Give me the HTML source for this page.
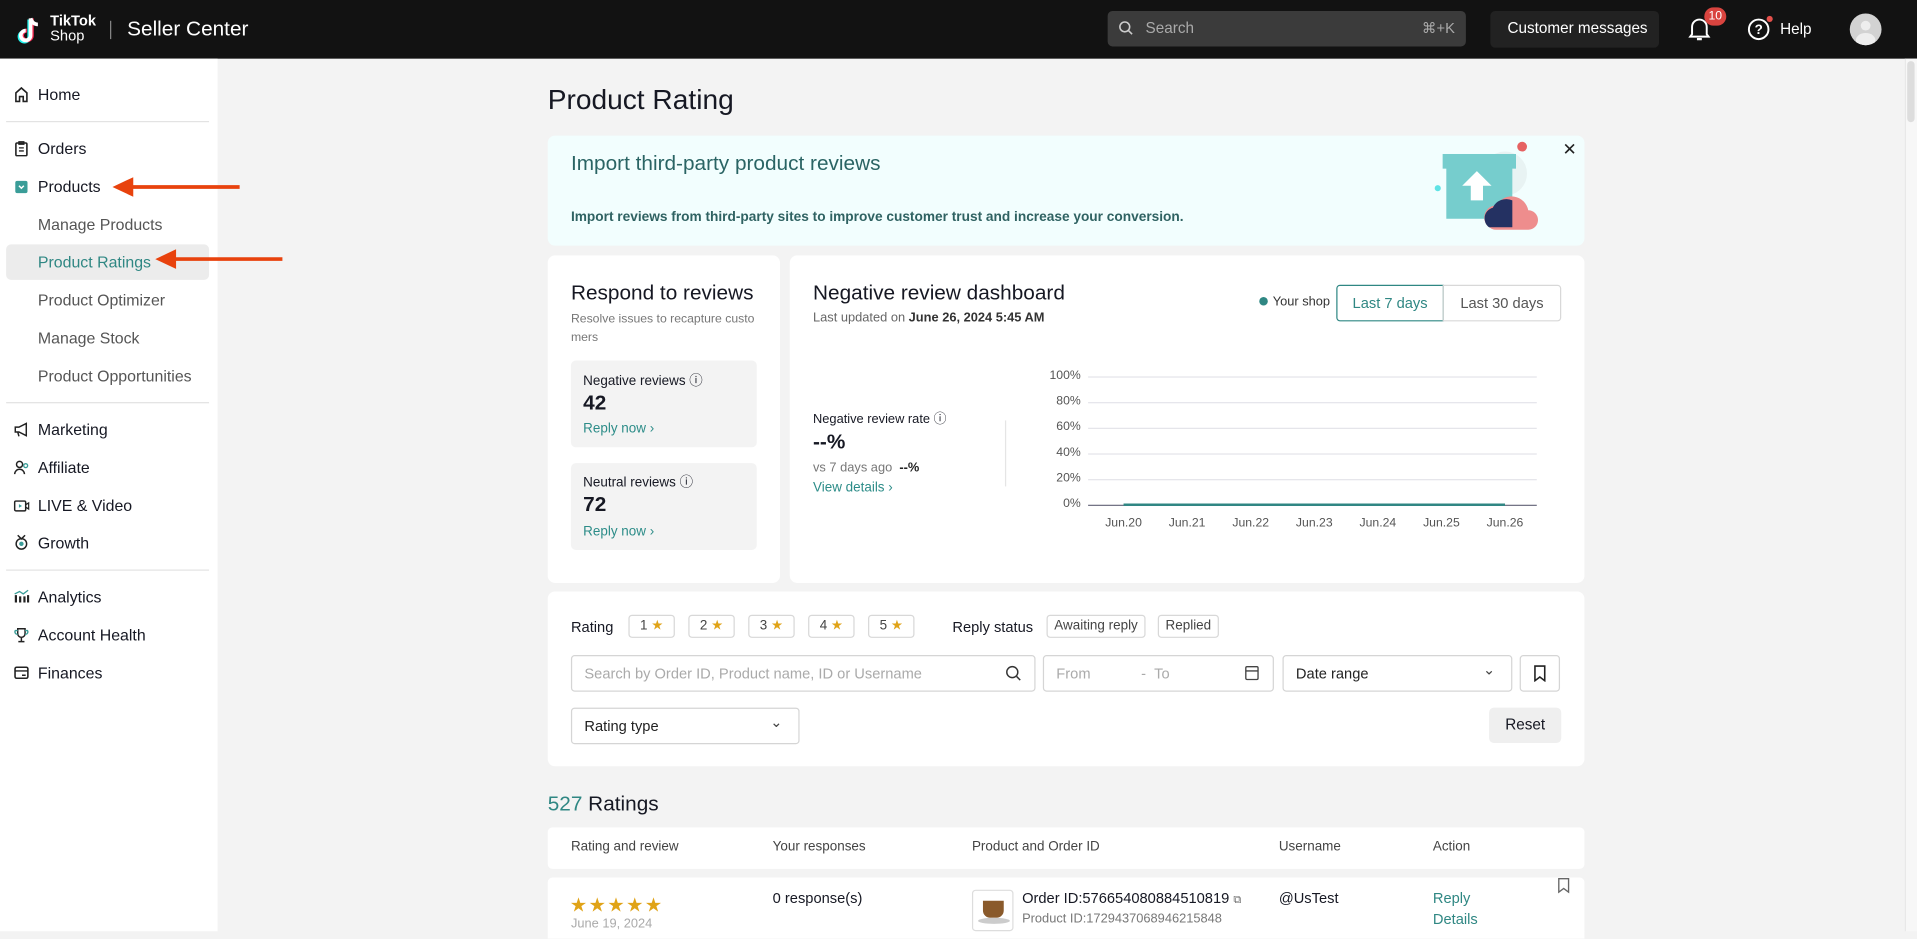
<!DOCTYPE html>
<html><head><meta charset="utf-8">
<style>
*{box-sizing:border-box;margin:0;padding:0}
html,body{width:1917px;height:930px;overflow:hidden;background:#f3f3f3}
body{font-family:"Liberation Sans",sans-serif;color:#161823}
#w{position:absolute;left:0;top:0;width:1568px;height:762px;transform:scale(1.22258,1.2221);transform-origin:0 0;background:#f3f3f3}
.a{position:absolute}
.hdr{left:0;top:0;width:1568px;height:48px;background:#121212}
.side{left:0;top:48px;width:178px;height:714px;background:#fff}
.ni{position:absolute;left:31px;font-size:13px;color:#161823;line-height:16px}
.sub{color:#555}
.ic{position:absolute;left:11px;width:13px;height:13px}
.dv{position:absolute;left:5px;width:166px;height:1px;background:#e3e3e3}
.card{position:absolute;background:#fff;border-radius:6px}
.t{position:absolute;white-space:nowrap}
.teal{color:#2c8c88}
.chip{position:absolute;top:503px;height:19px;border:1px solid #d8d8d8;border-radius:3px;font-size:11px;color:#444;line-height:17px;text-align:center}
.star{color:#e0a317}
.inp{position:absolute;height:30px;border:1px solid #d5d5d5;border-radius:3px;background:#fff;font-size:12px;line-height:28px;padding-left:10px}
.gl{position:absolute;left:890px;width:367px;height:1px;background:#e4e4ea}
.yl{position:absolute;width:40px;left:844px;text-align:right;font-size:10px;color:#555}
.xl{position:absolute;top:423px;font-size:10px;color:#555;width:40px;text-align:center}
</style></head><body><div id="w">
<div class="a hdr">
 <svg class="a" style="left:11px;top:12px" width="26" height="26" viewBox="0 0 26 26"><path d="M14 3v14a4 4 0 1 1-4-4" fill="none" stroke="#25f4ee" stroke-width="3.2" transform="translate(-1,1)"/><path d="M14 3v14a4 4 0 1 1-4-4" fill="none" stroke="#fe2c55" stroke-width="3.2" transform="translate(1,0)"/><path d="M14 3v14a4 4 0 1 1-4-4M14 3c1 3 3 5 6 5" fill="none" stroke="#fff" stroke-width="3"/></svg>
 <div class="t" style="left:41px;top:11px;color:#fff;font-size:12px;font-weight:bold;line-height:12px">TikTok</div>
 <div class="t" style="left:41px;top:23px;color:#fff;font-size:12px;line-height:13px">Shop</div>
 <div class="a" style="left:90px;top:17px;width:1px;height:15px;background:#888"></div>
 <div class="t" style="left:104px;top:14px;color:#fff;font-size:17px">Seller Center</div>
 <div class="a" style="left:906px;top:9px;width:293px;height:29px;background:#3b3b3b;border-radius:4px"></div>
 <svg class="a" style="left:915px;top:17px" width="12" height="12" viewBox="0 0 12 12"><circle cx="5" cy="5" r="4" fill="none" stroke="#ccc" stroke-width="1.3"/><path d="M8 8l3 3" stroke="#ccc" stroke-width="1.3"/></svg>
 <div class="t" style="left:937px;top:16px;color:#aaa;font-size:12.5px">Search</div>
 <div class="t" style="left:1163px;top:16px;color:#aaa;font-size:12px">⌘+K</div>
 <div class="a" style="left:1219px;top:9px;width:138px;height:30px;background:#222;border-radius:4px"></div>
 <div class="t" style="left:1233px;top:16px;color:#fff;font-size:12.5px">Customer messages</div>
 <svg class="a" style="left:1381px;top:14px" width="18" height="20" viewBox="0 0 18 20"><path d="M3 14V8a6 6 0 0 1 12 0v6l1.5 2h-15z" fill="none" stroke="#fff" stroke-width="1.6"/><path d="M7 18h4" stroke="#fff" stroke-width="1.8"/></svg>
 <div class="a" style="left:1394px;top:6px;width:18px;height:15px;border-radius:8px;background:#d9443f;color:#fff;font-size:10px;text-align:center;line-height:15px">10</div>
 <svg class="a" style="left:1429px;top:14px" width="20" height="20" viewBox="0 0 20 20"><circle cx="9.5" cy="10" r="8" fill="none" stroke="#fff" stroke-width="1.6"/><text x="9.5" y="14" font-size="11" font-weight="bold" text-anchor="middle" fill="#fff" font-family="Liberation Sans">?</text></svg>
 <div class="a" style="left:1445px;top:13px;width:5px;height:5px;border-radius:50%;background:#e4504b"></div>
 <div class="t" style="left:1456px;top:17px;color:#fff;font-size:12.5px">Help</div>
 <div class="a" style="left:1513px;top:11px;width:26px;height:26px;border-radius:50%;background:#d2d2d2;overflow:hidden"><div class="a" style="left:9px;top:6px;width:8px;height:8px;border-radius:50%;background:#eee"></div><div class="a" style="left:5px;top:16px;width:16px;height:12px;border-radius:50%;background:#eee"></div></div>
</div>
<div class="a" style="left:1558px;top:48px;width:10px;height:714px;background:#f7f7f7;border-left:1px solid #e8e8e8"></div>
<div class="a" style="left:1560px;top:50px;width:6px;height:50px;background:#ddd;border-radius:3px"></div>
<div class="a side">
 <div class="a" style="left:5px;top:152px;width:166px;height:29px;background:#ececec;border-radius:4px"></div>
</div>
<svg class="ic" style="top:71px" viewBox="0 0 13 13"><path d="M2 12V5l4.5-4 4.5 4v7H8V8H5v4z" fill="none" stroke="#222" stroke-width="1.3"/></svg>
<div class="ni" style="top:70px">Home</div>
<div class="dv" style="top:99px"></div>
<svg class="ic" style="top:115px" viewBox="0 0 13 13"><rect x="2" y="2" width="9" height="10.5" rx="1" fill="none" stroke="#222" stroke-width="1.3"/><path d="M4.5 1h4v2h-4z M4.5 6h4M4.5 8.5h4" stroke="#222" stroke-width="1.1" fill="none"/></svg>
<div class="ni" style="top:114px">Orders</div>
<svg class="ic" style="top:146px" viewBox="0 0 13 13"><rect x="1.5" y="2" width="10" height="10" rx="1.5" fill="#3a9d98"/><path d="M4.5 6l2 2 2-2" stroke="#fff" stroke-width="1.2" fill="none"/></svg>
<div class="ni" style="top:145px">Products</div>
<div class="ni sub" style="top:176px">Manage Products</div>
<div class="ni teal" style="top:207px;color:#2f8783">Product Ratings</div>
<div class="ni sub" style="top:238px">Product Optimizer</div>
<div class="ni sub" style="top:269px">Manage Stock</div>
<div class="ni sub" style="top:300px">Product Opportunities</div>
<div class="dv" style="top:329px"></div>
<svg class="ic" style="top:345px" viewBox="0 0 13 13"><path d="M1.5 4.5h3l6-3v10l-6-3h-3z M3.5 8.5l1 3.5" fill="none" stroke="#222" stroke-width="1.2"/></svg>
<div class="ni" style="top:344px">Marketing</div>
<svg class="ic" style="top:376px" viewBox="0 0 13 13"><circle cx="5" cy="4" r="2.5" fill="none" stroke="#222" stroke-width="1.2"/><path d="M1 12a4 4 0 0 1 8 0" fill="none" stroke="#222" stroke-width="1.2"/><circle cx="10" cy="5" r="1.6" fill="none" stroke="#3a9d98" stroke-width="1.1"/></svg>
<div class="ni" style="top:375px">Affiliate</div>
<svg class="ic" style="top:407px" viewBox="0 0 13 13"><rect x="1" y="3" width="9" height="8" rx="1" fill="none" stroke="#222" stroke-width="1.2"/><path d="M10 6l2.5-1.5v5L10 8" fill="none" stroke="#222" stroke-width="1.1"/><path d="M4.5 5.5v3l2.5-1.5z" fill="#3a9d98"/></svg>
<div class="ni" style="top:406px">LIVE &amp; Video</div>
<svg class="ic" style="top:437px" viewBox="0 0 13 13"><circle cx="6.5" cy="8" r="4.3" fill="none" stroke="#222" stroke-width="1.2"/><path d="M3.5 1l3 3 3-3" fill="none" stroke="#222" stroke-width="1.2"/><circle cx="6.5" cy="8" r="1.8" fill="#3a9d98"/></svg>
<div class="ni" style="top:437px">Growth</div>
<div class="dv" style="top:466px"></div>
<svg class="ic" style="top:481px" viewBox="0 0 13 13"><path d="M2 6v6M5.5 7v5M9 7v5M12 6v6" stroke="#222" stroke-width="1.8"/><path d="M1 5l4-2 3 2 4-3" stroke="#3a9d98" stroke-width="1.1" fill="none"/></svg>
<div class="ni" style="top:481px">Analytics</div>
<svg class="ic" style="top:513px" viewBox="0 0 13 13"><path d="M3.5 1.5h6v4a3 3 0 0 1-6 0z M6.5 8.5v3M4 12h5" fill="none" stroke="#222" stroke-width="1.2"/><path d="M3.5 3H1.5a2 2 0 0 0 2 3M9.5 3h2a2 2 0 0 1-2 3" fill="none" stroke="#3a9d98" stroke-width="1.1"/></svg>
<div class="ni" style="top:512px">Account Health</div>
<svg class="ic" style="top:544px" viewBox="0 0 13 13"><rect x="1.3" y="2" width="10.5" height="9" rx="1.3" fill="none" stroke="#222" stroke-width="1.3"/><path d="M1.5 5h10M7 8.5h3" stroke="#222" stroke-width="1.2"/></svg>
<div class="ni" style="top:543px">Finances</div>
<svg class="a" style="left:85px;top:140px" width="150" height="85" viewBox="0 0 150 85"><path d="M111 13H20" stroke="#e8420d" stroke-width="3"/><path d="M7 13l17-8v16z" fill="#e8420d"/><path d="M146 72H55" stroke="#e8420d" stroke-width="3"/><path d="M42 72l17-8v16z" fill="#e8420d"/></svg>

<div class="t" style="left:448px;top:68px;font-size:23px;color:#161823">Product Rating</div>
<div class="card" style="left:448px;top:111px;width:848px;height:90px;background:#f2fefe"></div>
<div class="t" style="left:467px;top:124px;font-size:17px;color:#2a6464">Import third-party product reviews</div>
<div class="t" style="left:467px;top:172px;font-size:11.2px;font-weight:bold;color:#2f6262">Import reviews from third-party sites to improve customer trust and increase your conversion.</div>
<svg class="a" style="left:1168px;top:114px" width="95" height="82" viewBox="0 0 95 82"><circle cx="63" cy="28" r="18" fill="#e8f3f3"/><circle cx="77" cy="6" r="4" fill="#e66262"/><circle cx="8" cy="40" r="2.5" fill="#5fe3e5"/><rect x="12" y="12" width="60" height="12" fill="#76cdcd"/><rect x="15" y="22" width="54" height="43" fill="#76cdcd"/><path d="M40 26l-12 12h7v12h10V38h7z" fill="#fff"/><path d="M56 74a10 10 0 0 1 0-20 14 14 0 0 1 26 4 8 8 0 0 1 0 16z" fill="#ee8d8d"/><path d="M50 72a9 9 0 0 1 3-16 12 12 0 0 1 16-6v22z" fill="#243162"/></svg>
<div class="t" style="left:1278px;top:114px;font-size:14px;color:#222">✕</div>

<div class="card" style="left:448px;top:209px;width:190px;height:268px"></div>
<div class="t" style="left:467px;top:230px;font-size:17px">Respond to reviews</div>
<div class="t" style="left:467px;top:254px;font-size:10px;color:#777;line-height:15px">Resolve issues to recapture custo<br>mers</div>
<div class="a" style="left:467px;top:295px;width:152px;height:71px;background:#f3f3f3;border-radius:4px"></div>
<div class="t" style="left:477px;top:303px;font-size:11px">Negative reviews ⓘ</div>
<div class="t" style="left:477px;top:320px;font-size:17px;font-weight:bold">42</div>
<div class="t teal" style="left:477px;top:345px;font-size:11px">Reply now ›</div>
<div class="a" style="left:467px;top:379px;width:152px;height:71px;background:#f3f3f3;border-radius:4px"></div>
<div class="t" style="left:477px;top:386px;font-size:11px">Neutral reviews ⓘ</div>
<div class="t" style="left:477px;top:403px;font-size:17px;font-weight:bold">72</div>
<div class="t teal" style="left:477px;top:429px;font-size:11px">Reply now ›</div>

<div class="card" style="left:646px;top:209px;width:650px;height:268px"></div>
<div class="t" style="left:665px;top:230px;font-size:17px">Negative review dashboard</div>
<div class="t" style="left:665px;top:254px;font-size:10.5px;color:#666">Last updated on <b style="color:#333">June 26, 2024 5:45 AM</b></div>
<div class="a" style="left:1030px;top:243px;width:7px;height:7px;border-radius:50%;background:#2f8783"></div>
<div class="t" style="left:1041px;top:241px;font-size:10.5px;color:#333">Your shop</div>
<div class="a" style="left:1093px;top:233px;width:88px;height:30px;border:1px solid #2f8783;border-radius:3px 0 0 3px;font-size:12px;color:#2f8783;text-align:center;line-height:28px">Last 7 days</div>
<div class="a" style="left:1180px;top:233px;width:97px;height:30px;border:1px solid #d8d8d8;border-radius:0 3px 3px 0;font-size:12px;color:#555;text-align:center;line-height:28px">Last 30 days</div>
<div class="t" style="left:665px;top:335px;font-size:10.5px">Negative review rate ⓘ</div>
<div class="t" style="left:665px;top:352px;font-size:17px;font-weight:bold">--%</div>
<div class="t" style="left:665px;top:377px;font-size:10.5px;color:#777">vs 7 days ago &nbsp;<b style="color:#222">--%</b></div>
<div class="t teal" style="left:665px;top:393px;font-size:11px">View details ›</div>
<div class="a" style="left:822px;top:344px;width:1px;height:54px;background:#e5e5e5"></div>
<div class="gl" style="top:308px"></div><div class="gl" style="top:329px"></div><div class="gl" style="top:350px"></div><div class="gl" style="top:371px"></div><div class="gl" style="top:392px"></div>
<div class="a" style="left:890px;top:413px;width:367px;height:1px;background:#6d6d80"></div>
<div class="a" style="left:919px;top:412px;width:312px;height:2px;background:#2f8783"></div>
<div class="yl" style="top:302px">100%</div><div class="yl" style="top:323px">80%</div><div class="yl" style="top:344px">60%</div><div class="yl" style="top:365px">40%</div><div class="yl" style="top:386px">20%</div><div class="yl" style="top:407px">0%</div>
<div class="xl" style="left:899px">Jun.20</div><div class="xl" style="left:951px">Jun.21</div><div class="xl" style="left:1003px">Jun.22</div><div class="xl" style="left:1055px">Jun.23</div><div class="xl" style="left:1107px">Jun.24</div><div class="xl" style="left:1159px">Jun.25</div><div class="xl" style="left:1211px">Jun.26</div>

<div class="card" style="left:448px;top:484px;width:848px;height:143px"></div>
<div class="t" style="left:467px;top:506px;font-size:12px">Rating</div>
<div class="chip" style="left:514px;width:38px">1 <span class="star">★</span></div>
<div class="chip" style="left:563px;width:38px">2 <span class="star">★</span></div>
<div class="chip" style="left:612px;width:38px">3 <span class="star">★</span></div>
<div class="chip" style="left:661px;width:38px">4 <span class="star">★</span></div>
<div class="chip" style="left:710px;width:38px">5 <span class="star">★</span></div>
<div class="t" style="left:779px;top:506px;font-size:12px">Reply status</div>
<div class="chip" style="left:856px;width:81px">Awaiting reply</div>
<div class="chip" style="left:947px;width:50px">Replied</div>
<div class="inp" style="left:467px;top:536px;width:380px;color:#aaa">Search by Order ID, Product name, ID or Username</div>
<svg class="a" style="left:822px;top:544px" width="14" height="14" viewBox="0 0 14 14"><circle cx="6" cy="6" r="4.5" fill="none" stroke="#333" stroke-width="1.2"/><path d="M9.5 9.5l3 3" stroke="#333" stroke-width="1.2"/></svg>
<div class="inp" style="left:853px;top:536px;width:189px;color:#aaa">From <span style="margin-left:38px">- &nbsp;To</span></div>
<svg class="a" style="left:1018px;top:544px" width="12" height="13" viewBox="0 0 12 13"><rect x="1" y="1.5" width="10" height="10.5" rx="1" fill="none" stroke="#444" stroke-width="1.1"/><path d="M1 5h10" stroke="#444" stroke-width="1.1"/></svg>
<div class="inp" style="left:1049px;top:536px;width:188px;color:#222">Date range</div>
<div class="t" style="left:1213px;top:541px;font-size:12px;color:#444">⌄</div>
<div class="inp" style="left:1243px;top:536px;width:33px;padding:0"></div>
<svg class="a" style="left:1254px;top:544px" width="11" height="14" viewBox="0 0 11 14"><path d="M1.5 1h8v12l-4-3-4 3z" fill="none" stroke="#222" stroke-width="1.3"/></svg>
<div class="inp" style="left:467px;top:579px;width:187px;color:#222">Rating type</div>
<div class="t" style="left:630px;top:584px;font-size:12px;color:#444">⌄</div>
<div class="a" style="left:1218px;top:579px;width:59px;height:29px;background:#efefef;border-radius:4px;font-size:12.5px;text-align:center;line-height:29px">Reset</div>

<div class="t" style="left:448px;top:648px;font-size:17px"><span class="teal" style="color:#2f8783">527</span> Ratings</div>
<div class="card" style="left:448px;top:677px;width:848px;height:34px;border-radius:4px"></div>
<div class="t" style="left:467px;top:687px;font-size:11px;color:#444">Rating and review</div>
<div class="t" style="left:632px;top:687px;font-size:11px;color:#444">Your responses</div>
<div class="t" style="left:795px;top:687px;font-size:11px;color:#444">Product and Order ID</div>
<div class="t" style="left:1046px;top:687px;font-size:11px;color:#444">Username</div>
<div class="t" style="left:1172px;top:687px;font-size:11px;color:#444">Action</div>
<div class="card" style="left:448px;top:718px;width:848px;height:50px;border-radius:4px 4px 0 0"></div>
<div class="t star" style="left:466px;top:731px;font-size:16px;letter-spacing:1px">★★★★★</div>
<div class="t" style="left:467px;top:750px;font-size:10.5px;color:#aaa">June 19, 2024</div>
<div class="t" style="left:632px;top:728px;font-size:12px">0 response(s)</div>
<div class="a" style="left:795px;top:728px;width:34px;height:34px;border:1px solid #ddd;border-radius:3px;background:#fff;overflow:hidden"><div class="a" style="left:8px;top:8px;width:17px;height:14px;background:#8a5a2b;border-radius:0 0 6px 6px"></div><div class="a" style="left:4px;top:22px;width:26px;height:5px;background:#ccc;border-radius:50%"></div></div>
<div class="t" style="left:836px;top:728px;font-size:12px">Order ID:576654080884510819 <span style="font-size:9px;color:#666">⧉</span></div>
<div class="t" style="left:836px;top:746px;font-size:10.5px;color:#777">Product ID:1729437068946215848</div>
<div class="t" style="left:1046px;top:728px;font-size:12px">@UsTest</div>
<div class="t" style="left:1172px;top:728px;font-size:12px;color:#2f8783">Reply</div>
<div class="t" style="left:1172px;top:745px;font-size:12px;color:#2f8783">Details</div>
<svg class="a" style="left:1274px;top:718px" width="10" height="13" viewBox="0 0 10 13"><path d="M1 1h8v11L5 9l-4 3z" fill="none" stroke="#666" stroke-width="1.1"/></svg>
</div></body></html>
